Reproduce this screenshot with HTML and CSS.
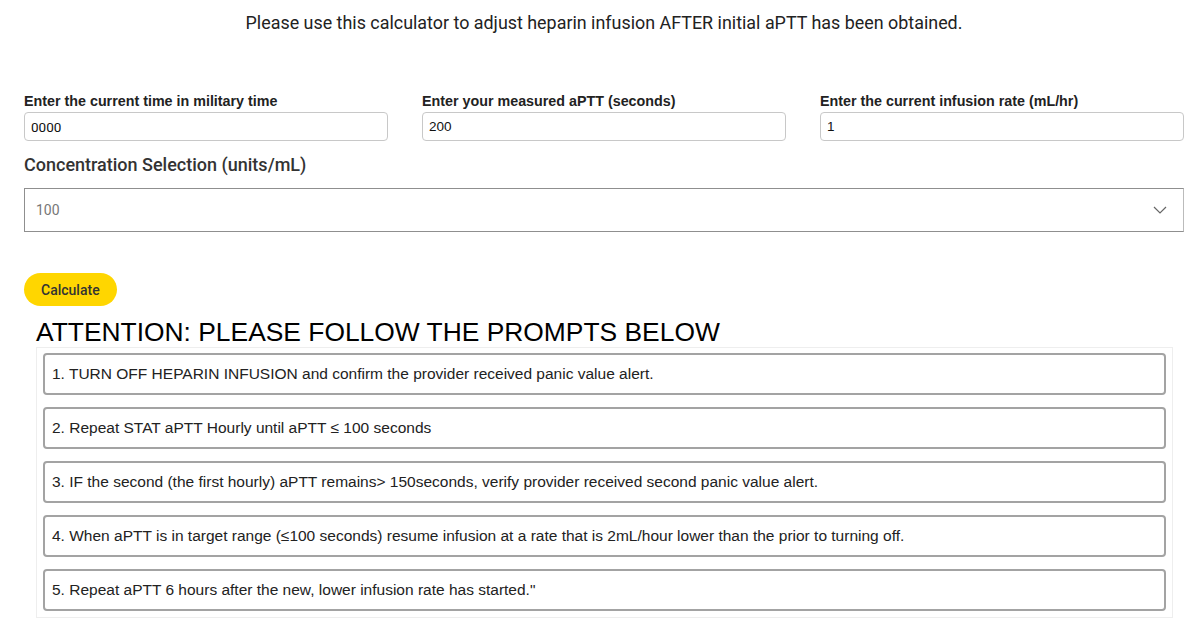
FILE: index.html
```html
<!DOCTYPE html>
<html lang="en">
<head>
    <meta charset="UTF-8">
    <meta name="viewport" content="width=device-width, initial-scale=1.0">
    <title>Heparin Calculator</title>
    <link rel="stylesheet" href="styles.css">
</head>
<body>
    <div class="page">
        <p class="intro">Please use this calculator to adjust heparin infusion AFTER initial aPTT has been obtained.</p>

        <div class="fields">
            <div class="field">
                <label for="time">Enter the current time in military time</label>
                <input type="text" id="time" class="roboto" value="0000">
            </div>
            <div class="field">
                <label for="aptt">Enter your measured aPTT (seconds)</label>
                <input type="text" id="aptt" value="200">
            </div>
            <div class="field">
                <label for="rate">Enter the current infusion rate (mL/hr)</label>
                <input type="text" id="rate" value="1">
            </div>
        </div>

        <h3 class="conc-title">Concentration Selection (units/mL)</h3>
        <div class="select-box">
            <span>100</span>
            <svg width="14" height="8" viewBox="0 0 14 8"><path d="M1 1 L7 7 L13 1" fill="none" stroke="#666" stroke-width="1.2"/></svg>
        </div>

        <button type="button" class="calc-btn">Calculate</button>

        <h2 class="attention">ATTENTION: PLEASE FOLLOW THE PROMPTS BELOW</h2>
        <div class="prompts">
            <div class="prompt">1. TURN OFF HEPARIN INFUSION and confirm the provider received panic value alert.</div>
            <div class="prompt">2. Repeat STAT aPTT Hourly until aPTT &le; 100 seconds</div>
            <div class="prompt">3. IF the second (the first hourly) aPTT remains&gt; 150seconds, verify provider received second panic value alert.</div>
            <div class="prompt">4. When aPTT is in target range (&le;100 seconds) resume infusion at a rate that is 2mL/hour lower than the prior to turning off.</div>
            <div class="prompt">5. Repeat aPTT 6 hours after the new, lower infusion rate has started."</div>
        </div>
    </div>
</body>
</html>
```

FILE: styles.css
```css
body {
    margin: 0;
    background: #fff;
    font-family: 'Liberation Sans', Arial, sans-serif;
    color: #222;
}

.page {
    padding: 0 16px 0 24px;
}

/* Intro line */
.intro {
    font-family: Roboto, sans-serif;
    font-size: 17.9px;
    color: #222;
    text-align: center;
    margin: 0;
    padding-top: 12px;
    line-height: 22px;
}

/* Input row */
.fields {
    display: grid;
    grid-template-columns: repeat(3, 364px);
    column-gap: 34px;
    margin-top: 59px;
}

.field label {
    display: block;
    font-size: 14.3px;
    font-weight: bold;
    line-height: 17px;
    margin-bottom: 2px;
}

.field input {
    box-sizing: border-box;
    width: 100%;
    height: 29px;
    border: 1px solid #c8c8c8;
    border-radius: 4px;
    padding: 0 6px;
    font-family: 'Liberation Sans', Arial, sans-serif;
    font-size: 13.5px;
    color: #111;
    outline: none;
}

.field input.roboto {
    font-family: Roboto, sans-serif;
}

/* Concentration select */
.conc-title {
    font-family: Roboto, sans-serif;
    font-weight: 500;
    font-size: 18px;
    color: #333;
    margin: 12px 0 0;
    line-height: 24px;
}

.select-box {
    box-sizing: border-box;
    width: 1160px;
    height: 44px;
    margin-top: 11px;
    border: 1px solid #8f8f8f;
    border-right-color: #bbb;
    display: flex;
    align-items: center;
    justify-content: space-between;
    padding: 0 16px 0 11px;
    font-family: Roboto, sans-serif;
    font-size: 14px;
    color: #777;
}

/* Button */
.calc-btn {
    display: block;
    margin-top: 41px;
    height: 33px;
    padding: 0 17px;
    border: none;
    border-radius: 17px;
    background: #ffd600;
    font-family: Roboto, sans-serif;
    font-weight: 500;
    font-size: 14px;
    color: #333;
}

/* Prompts */
.attention {
    font-weight: normal;
    font-size: 26.4px;
    color: #000;
    margin: 12px 0 0 12px;
    line-height: 29px;
}

.prompts {
    box-sizing: border-box;
    width: 1137px;
    margin-left: 12px;
    border: 1px solid #eee;
    padding: 5px 6px 6px;
    display: flex;
    flex-direction: column;
    gap: 12px;
}

.prompt {
    box-sizing: border-box;
    height: 42px;
    border: 2px solid #a3a3a3;
    border-radius: 4px;
    padding: 0 7px;
    display: flex;
    align-items: center;
    font-size: 15.5px;
    color: #222;
}
```
